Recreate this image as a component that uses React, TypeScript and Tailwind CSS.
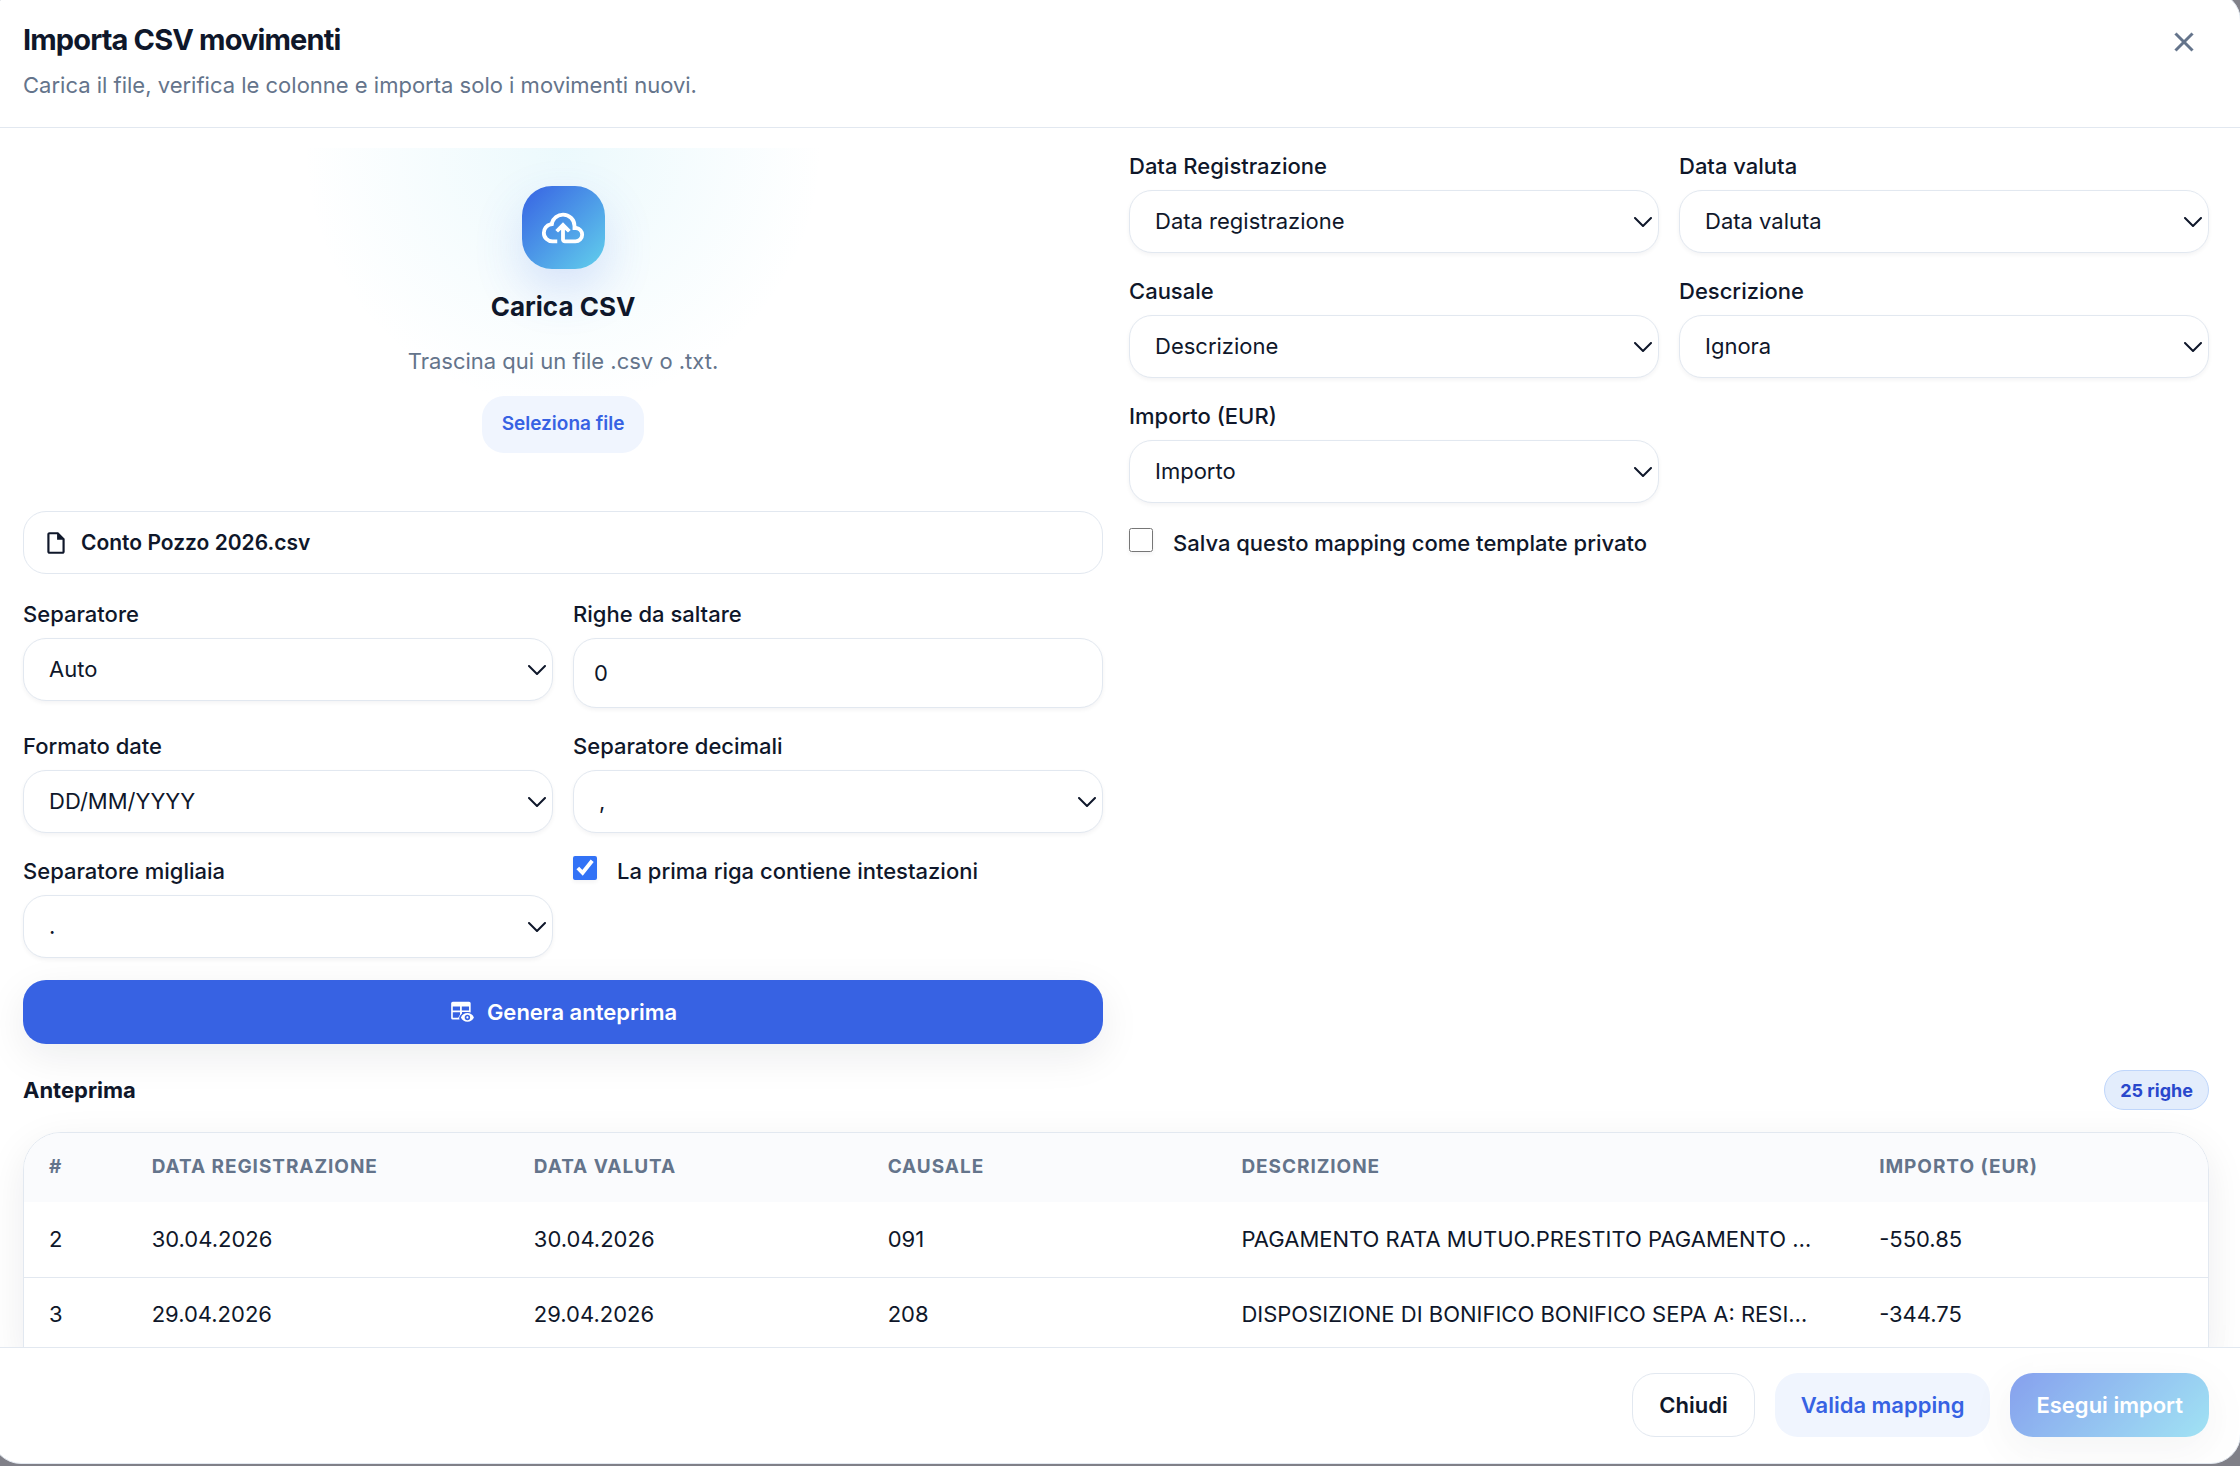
import React, { useState } from 'react';

const fieldClass =
  'w-full rounded-[23px] border border-[#e2e8f0] bg-white text-[22px] text-[#0f172a] shadow-[0_2px_4px_rgba(15,23,42,0.05)] focus:outline-none focus:ring-2 focus:ring-blue-300';

const CloudUploadIcon = () => (
  <svg viewBox="0 -960 960 960" fill="currentColor" className="size-[46px]" aria-hidden="true">
    <path d="M260-160q-91 0-155.5-63T40-377q0-78 47-139t123-78q25-92 100-149t170-57q117 0 198.5 81.5T760-520q69 8 114.5 59.5T920-340q0 75-52.5 127.5T740-160H520q-33 0-56.5-23.5T440-240v-206l-64 62-56-56 160-160 160 160-56 56-64-62v206h220q42 0 71-29t29-71q0-42-29-71t-71-29h-60v-80q0-83-58.5-141.5T480-720q-83 0-141.5 58.5T280-520h-20q-58 0-99 41t-41 99q0 58 41 99t99 41h100v80H260Z" />
  </svg>
);

const CloseIcon = () => (
  <svg
    viewBox="0 -960 960 960"
    fill="currentColor"
    stroke="currentColor"
    strokeWidth="12"
    className="size-8"
    aria-hidden="true"
  >
    <path d="m256-200-56-56 224-224-224-224 56-56 224 224 224-224 56 56-224 224 224 224-56 56-224-224-224 224Z" />
  </svg>
);

const FileIcon = () => (
  <svg viewBox="0 -960 960 960" fill="currentColor" className="size-[26px]" aria-hidden="true">
    <path d="M240-80q-33 0-56.5-23.5T160-160v-640q0-33 23.5-56.5T240-880h320l240 240v480q0 33-23.5 56.5T720-80H240Zm280-520v-200H240v640h480v-440H520Z" />
  </svg>
);

const TableEyeIcon = () => (
  <svg viewBox="0 0 24 24" fill="currentColor" className="size-[26px]" aria-hidden="true">
    <path
      fillRule="evenodd"
      d="M3.500 2.500h15a1.500 1.500 0 0 1 1.500 1.500v8.500A9.500 9.500 0 0 0 18 12h-6v1.300A8.500 8.500 0 0 0 9.300 17.500l.5 1.500H3.500A1.500 1.500 0 0 1 2 17.500V4a1.500 1.500 0 0 1 1.500-1.500Zm0 4.500v3.500h6.700V7H3.500Zm8.300 0v3.500h6.700V7h-6.700ZM3.500 12.300v5h5l1.700-3v-2H3.500Z"
    />
    <path
      fillRule="evenodd"
      d="M17 13c2.730 0 5.060 1.660 6 4-.94 2.340-3.270 4-6 4s-5.060-1.660-6-4c.94-2.340 3.270-4 6-4Zm0 1.500a2.500 2.500 0 1 0 0 5 2.500 2.500 0 0 0 0-5Zm0 1.500a1 1 0 1 1 0 2 1 1 0 0 1 0-2Z"
    />
  </svg>
);

const ChevronIcon = () => (
  <svg
    viewBox="0 0 18 10"
    fill="none"
    stroke="currentColor"
    strokeWidth="2"
    strokeLinecap="round"
    strokeLinejoin="round"
    className="pointer-events-none col-start-1 row-start-1 mr-[7px] h-[10px] w-[18px] self-center justify-self-end text-[#0f172a]"
    aria-hidden="true"
  >
    <path d="M1 1l8 8 8-8" />
  </svg>
);

interface SelectFieldProps {
  id: string;
  label: string;
  options: string[];
}

const SelectField: React.FC<SelectFieldProps> = ({ id, label, options }) => (
  <div className="flex flex-col gap-1.5">
    <label htmlFor={id} className="text-[22px] leading-9 font-medium">
      {label}
    </label>
    <div className="grid">
      <select id={id} className={`${fieldClass} col-start-1 row-start-1 h-[63px] appearance-none px-[25px]`}>
        {options.map((option) => (
          <option key={option}>{option}</option>
        ))}
      </select>
      <ChevronIcon />
    </div>
  </div>
);

interface CheckFieldProps {
  id: string;
  label: string;
  initial?: boolean;
}

const CheckField: React.FC<CheckFieldProps> = ({ id, label, initial = false }) => {
  const [checked, setChecked] = useState(initial);

  return (
    <div className="flex items-start gap-5">
      <input
        id={id}
        type="checkbox"
        checked={checked}
        onChange={(e) => setChecked(e.target.checked)}
        className="mt-[3px] size-6 shrink-0 accent-[#3272f6] shadow-[0_2px_4px_rgba(15,23,42,0.05)]"
      />
      <label htmlFor={id} className="text-[22px] leading-9 font-medium">
        {label}
      </label>
    </div>
  );
};

const columns = [
  { title: '#', width: 'w-[4.7%]' },
  { title: 'Data Registrazione', width: 'w-[17.5%]' },
  { title: 'Data valuta', width: 'w-[16.2%]' },
  { title: 'Causale', width: 'w-[16.2%]' },
  { title: 'Descrizione', width: 'w-[29.2%]' },
  { title: 'Importo (EUR)', width: 'w-[16.2%]' },
];

const rows = [
  ['2', '30.04.2026', '30.04.2026', '091', 'PAGAMENTO RATA MUTUO.PRESTITO PAGAMENTO …', '-550.85'],
  ['3', '29.04.2026', '29.04.2026', '208', 'DISPOSIZIONE DI BONIFICO BONIFICO SEPA A: RESI…', '-344.75'],
];

export default function App() {
  const [skip, setSkip] = useState('0');

  return (
    <div className="h-screen overflow-hidden bg-[#808088] font-['Inter',sans-serif] text-[#0f172a]">
      <div
        role="dialog"
        aria-labelledby="dialog-title"
        className="-mt-[9px] -mr-px -ml-[9px] flex h-[calc(100%+7px)] flex-col overflow-hidden rounded-[30px] border border-[#e2e8f0] bg-white"
      >
        <header className="flex items-start justify-between border-b border-[#e2e8f0] pt-7 pr-10 pb-6 pl-[31px]">
          <div>
            <h2 id="dialog-title" className="text-[29px] leading-10 font-bold tracking-[-0.03em]">
              Importa CSV movimenti
            </h2>
            <p className="mt-[7px] text-[22px] leading-9 text-[#64748b]">
              Carica il file, verifica le colonne e importa solo i movimenti nuovi.
            </p>
          </div>
          <button type="button" aria-label="Chiudi finestra" className="mt-[6px] text-[#64748b] hover:text-[#0f172a]">
            <CloseIcon />
          </button>
        </header>

        <div className="min-h-0 flex-1 overflow-y-auto px-[31px] pt-5 [scrollbar-width:none]">
          <div className="grid grid-cols-2 items-start gap-[26px]">
            <div className="flex flex-col gap-[22px]">
              <div className="flex flex-col items-center bg-[radial-gradient(circle_at_top,rgba(98,208,236,0.12),transparent_260px)] pt-[38px] pb-9">
                <div className="flex size-[83px] items-center justify-center rounded-[30px] bg-[linear-gradient(135deg,#3762e3,#62d0ec)] text-white shadow-[0_20px_50px_rgba(55,98,227,0.18)]">
                  <CloudUploadIcon />
                </div>
                <h3 className="mt-5 text-[26px] leading-9 font-bold">Carica CSV</h3>
                <p className="mt-[18px] text-[22px] leading-9 text-[#64748b]">Trascina qui un file .csv o .txt.</p>
                <button
                  type="button"
                  className="mt-[17px] h-[57px] rounded-[22px] bg-[#f0f5fe] px-5 text-[19px] font-semibold text-[#3762e3] hover:bg-blue-100"
                >
                  Seleziona file
                </button>
              </div>

              <div className="flex h-[63px] items-center gap-3 rounded-[23px] border border-[#e2e8f0] px-[19px]">
                <FileIcon />
                <span className="text-[21px] font-semibold">Conto Pozzo 2026.csv</span>
              </div>

              <div className="grid grid-cols-2 items-start gap-5">
                <SelectField id="separator" label="Separatore" options={['Auto', 'Virgola', 'Punto e virgola']} />
                <div className="flex flex-col gap-1.5">
                  <label htmlFor="skip" className="text-[22px] leading-9 font-medium">
                    Righe da saltare
                  </label>
                  <input
                    id="skip"
                    type="number"
                    min={0}
                    value={skip}
                    onChange={(e) => setSkip(e.target.value)}
                    className={`${fieldClass} h-[70px] px-5`}
                  />
                </div>
                <SelectField id="date-format" label="Formato date" options={['DD/MM/YYYY', 'YYYY-MM-DD']} />
                <SelectField id="decimal" label="Separatore decimali" options={[',', '.']} />
                <SelectField id="thousands" label="Separatore migliaia" options={['.', ',']} />
                <CheckField id="has-header" label="La prima riga contiene intestazioni" initial />
              </div>

              <button
                type="button"
                className="flex h-16 items-center justify-center gap-3 rounded-[23px] bg-[#3762e3] text-[22px] font-semibold text-white shadow-[0_12px_40px_rgba(15,23,42,0.08)] hover:bg-[#2d55cf]"
              >
                <TableEyeIcon />
                Genera anteprima
              </button>
            </div>

            <div className="flex flex-col gap-[22px]">
              <div className="grid grid-cols-2 items-start gap-5">
                <SelectField id="map-date" label="Data Registrazione" options={['Data registrazione', 'Ignora']} />
                <SelectField id="map-value-date" label="Data valuta" options={['Data valuta', 'Ignora']} />
                <SelectField id="map-reason" label="Causale" options={['Descrizione', 'Ignora']} />
                <SelectField id="map-description" label="Descrizione" options={['Ignora', 'Descrizione']} />
                <SelectField id="map-amount" label="Importo (EUR)" options={['Importo', 'Ignora']} />
              </div>
              <CheckField id="save-template" label="Salva questo mapping come template privato" />
            </div>
          </div>

          <div className="mt-[26px] flex items-center justify-between">
            <h3 className="text-[22px] font-bold">Anteprima</h3>
            <span className="flex h-10 items-center rounded-full border border-[#bfd6fb] bg-[#e3edfc] px-[15px] text-[18px] font-bold text-[#2948cc]">
              25 righe
            </span>
          </div>

          <div className="mt-[22px] overflow-hidden rounded-t-[38px] border border-[#e2e8f0] shadow-[0_12px_40px_rgba(15,23,42,0.08)]">
            <table className="w-full table-fixed text-left">
              <thead className="bg-[#fafbfd] text-[#64748b]">
                <tr className="h-[69px]">
                  {columns.map((col) => (
                    <th
                      key={col.title}
                      scope="col"
                      className={`${col.width} px-[25px] text-[19px] font-bold tracking-wider uppercase`}
                    >
                      {col.title}
                    </th>
                  ))}
                </tr>
              </thead>
              <tbody>
                {rows.map((row) => (
                  <tr key={row[0]} className="h-[75px] border-b border-[#e2e8f0]">
                    {row.map((cell, idx) => (
                      <td key={idx} className="truncate px-[25px] text-[22px]">
                        {cell}
                      </td>
                    ))}
                  </tr>
                ))}
              </tbody>
            </table>
          </div>
        </div>

        <footer className="flex justify-end gap-5 border-t border-[#e2e8f0] pt-[25px] pr-[31px] pb-[26px] text-[22px] font-semibold">
          <button type="button" className="h-16 rounded-[23px] border border-[#e2e8f0] px-[26px] hover:bg-gray-50">
            Chiudi
          </button>
          <button type="button" className="h-16 rounded-[23px] bg-[#f0f5fe] px-[26px] text-[#3762e3] hover:bg-blue-100">
            Valida mapping
          </button>
          <button
            type="button"
            disabled
            className="h-16 rounded-[23px] bg-[linear-gradient(135deg,#3762e3,#62d0ec)] px-[26px] text-white opacity-60 shadow-[0_12px_40px_rgba(15,23,42,0.08)]"
          >
            Esegui import
          </button>
        </footer>
      </div>
    </div>
  );
}
